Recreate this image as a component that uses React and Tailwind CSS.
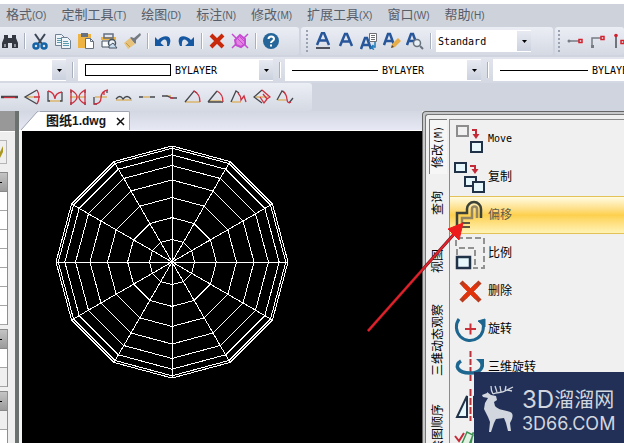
import clsx from "clsx";

const MENUS = [
  { label: "格式", hotkey: "(O)" },
  { label: "定制工具", hotkey: "(T)" },
  { label: "绘图", hotkey: "(D)" },
  { label: "标注", hotkey: "(N)" },
  { label: "修改", hotkey: "(M)" },
  { label: "扩展工具", hotkey: "(X)" },
  { label: "窗口", hotkey: "(W)" },
  { label: "帮助", hotkey: "(H)" },
];

const LETTER = "M3 15 L8 3 H10 L15 15 M5.5 10.5 H12.5";

const EDIT_ICONS = {
  find: (
    <g fill="#343941">
      <path d="M3 3h4v3h4V3h4v3l2 5v5h-6v-5H7v5H1v-5l2-5z" />
      <path d="M3 12h2v3H3zM13 12h2v3h-2z" fill="#8d939d" />
    </g>
  ),
  cut: (
    <g fill="none">
      <path d="M4 2l7 10M14 2L7 12" stroke="#3c4654" strokeWidth="2" />
      <circle cx="5" cy="14" r="2.5" stroke="#1664a8" strokeWidth="2.500" />
      <circle cx="13" cy="14" r="2.5" stroke="#1664a8" strokeWidth="2.500" />
    </g>
  ),
  copy: (
    <g fill="#eef4f8" stroke="#6f8193">
      <path d="M1.500 2.500h6l3 3v8h-9z" />
      <path d="M3 6.500h4M3 8.500h4M3 10.500h4" stroke="#5b9aad" />
      <path d="M7.500 5.500h6l3 3v8h-9z" />
      <path d="M9 9.500h5M9 11.500h6M9 13.500h6" stroke="#5b9aad" />
    </g>
  ),
  paste: (
    <g>
      <path d="M1 2h13v14H1z" fill="#edb343" />
      <path d="M4 1h7v4H4z" fill="#657080" />
      <path d="M8.500 6.500h5l3 3v7h-8z" fill="#fff" stroke="#66717f" />
      <path d="M13.500 6.500v3h3" fill="none" stroke="#66717f" />
    </g>
  ),
  pasteSpecial: (
    <g>
      <path d="M1 5h15v3H1z" fill="#edb343" />
      <path d="M4 2h9v4H4z" fill="none" stroke="#657080" strokeWidth="1.500" />
      <path d="M2 9h8v6H2z" fill="#f8fafb" stroke="#465361" />
      <circle cx="12" cy="11" r="3.500" fill="#eef4f8" stroke="#465361" strokeWidth="1.500" />
      <path d="M9 14l4-3 4 5H9z" fill="#c9dff1" stroke="#465361" />
    </g>
  ),
  brush: (
    <g>
      <path d="M17 1l-6 5-3-1-1 1 5 6 1-1 0-3 5-5z" fill="#747a80" />
      <path d="M7 6L1 11l4 6 7-5z" fill="#e7c27a" />
      <path d="M3 11l4 4" stroke="#c79a45" />
    </g>
  ),
  undo: <path d="M1 5v9h9l-3.500-3C9 6 14 6 13 14h2C20 3 10 2 4 8z" fill="#1557a0" />,
  redo: <path d="M17 5v9H8l3.500-3C9 6 4 6 5 14H3C-2 3 8 2 14 8z" fill="#1557a0" />,
  erase: <path d="M3 3l12 12M15 3L3 15" stroke="#c8290b" strokeWidth="4" />,
  explode: (
    <g stroke="#c54bd0" fill="none">
      <path d="M1 2l4 4M17 2l-4 4M1 16l4-4M17 16l-4-4" strokeWidth="1.500" />
      <path d="M9 3l5 4v5l-4 3-5-2-1-5z" fill="#e483e4" strokeWidth="2" />
      <path d="M7 7l5 5M9 5l4 4" stroke="#c54bd0" />
    </g>
  ),
  help: (
    <g>
      <circle cx="9" cy="9" r="8" fill="#24669a" />
      <path d="M6.500 7c0-3.500 5.500-3.500 5.500 0 0 2-3 2-3 4" fill="none" stroke="#fff" strokeWidth="2" />
      <path d="M8 12.500h2v2H8z" fill="#fff" />
    </g>
  ),
};

const TEXT_ICONS = {
  single: (
    <g fill="none">
      <path d={LETTER} stroke="#28569a" strokeWidth="2.500" transform="translate(0 -2)" />
      <path d="M2 16h14" stroke="#1c222c" strokeWidth="1.500" />
    </g>
  ),
  multi: <path d={LETTER} fill="none" stroke="#28569a" strokeWidth="2.500" transform="translate(0 -1)" />,
  field: (
    <g fill="none">
      <path d="M1 17L5 6h2l4 11M3 13h6" stroke="#28569a" strokeWidth="2.500" />
      <path d="M9.500 1.500h7v8h-7z" fill="#fff" stroke="#6d6f73" />
      <path d="M11 3.500h4M11 5.500h4M11 7.500h4" stroke="#6d6f73" />
      <path d="M15 10v5h-3M13.500 13L11 15.500l3 2" stroke="#1e79b8" strokeWidth="1.500" />
    </g>
  ),
  edit: (
    <g fill="none">
      <path d="M1 13L5 2h2l4 11M3 9h6" stroke="#28569a" strokeWidth="2.500" />
      <path d="M8 16l1-4 6-6 3 3-6 6z" fill="#e8ad4b" />
      <path d="M8 16l1-3 2 2z" fill="#5d4630" />
    </g>
  ),
  search: (
    <g fill="none">
      <path d="M1 13L5 2h2l4 11M3 9h6" stroke="#28569a" strokeWidth="2.500" />
      <circle cx="11" cy="11" r="3.500" fill="#eaf1f6" stroke="#68727e" strokeWidth="1.500" />
      <path d="M14 14l3 3" stroke="#68727e" strokeWidth="2" />
    </g>
  ),
};

const LEADER_ICONS = {
  straight: (
    <g>
      <path d="M3 9h10" stroke="#777c84" strokeWidth="1.500" />
      <circle cx="3" cy="9" r="1.500" fill="#777c84" />
      <rect x="13" y="7.500" width="3" height="3" fill="none" stroke="#d5202c" strokeWidth="1.500" />
    </g>
  ),
  elbow: (
    <g>
      <path d="M3 15V6h9" fill="none" stroke="#777c84" strokeWidth="1.500" />
      <path d="M2 13h3v3H2z" fill="#777c84" />
      <rect x="12" y="4.500" width="3" height="3" fill="none" stroke="#d5202c" strokeWidth="1.500" />
    </g>
  ),
  upright: (
    <g>
      <path d="M4 5v11" stroke="#4b5058" strokeWidth="1.500" />
      <circle cx="4" cy="3.500" r="1.800" fill="#d5202c" />
      <rect x="9" y="8.500" width="3" height="3" fill="none" stroke="#d5202c" strokeWidth="1.500" />
    </g>
  ),
};

// each curve: dark strokes, red strokes, tan base line
const CURVES = [
  { name: "直线", dark: "M0 8.500h17M0 9.500h3M14 9.500h3", red: "M3 9.500h11", tan: "" },
  { name: "扇形", dark: "M14 2L2 9l12 7", red: "M14 2q4 7 0 14M11 9h6", tan: "M3 9h9" },
  { name: "双弧", dark: "M2 3v10h2M16 4v9h-2", red: "M2 3q6 1 7 8q0-6 7-7", tan: "M3 13h12" },
  { name: "对弧", dark: "M2 2v3M2 14v3M16 2v3M16 14v3", red: "M2 2q12 7 0 14zM16 2q-12 7 0 14z", tan: "M1 9h16" },
  { name: "反弧", dark: "M2 9v7h3M15 2v3", red: "M16 2q-7 1-7 8q0 6-7 6M12 3v4", tan: "M3 9h12" },
  { name: "双拱", dark: "M1 11q4-5 7 0q4-5 8 0", red: "", tan: "M1 12h16" },
  { name: "虚线", dark: "M1 9h4M12 9h5", red: "", tan: "M5 9h7" },
  { name: "折线", dark: "M1 8h5l5 2h5", red: "M9 10h3", tan: "M5 8h5" },
  { name: "弧角", dark: "M1 14L10 3l3 2", red: "M10 3q6 3 6 11", tan: "M1 14h15" },
  { name: "弧角二", dark: "M1 14L10 3M1 14h15", red: "M10 3q6 3 6 11", tan: "M3 13h11" },
  { name: "弧折", dark: "M1 14L6 3l3 2", red: "M8 5q3 3 3 7l3-4l2 6", tan: "M2 14h9" },
  { name: "菱形", dark: "M9 2L1 9l8 6", red: "M9 2l8 7l-3 2l-4-5M7 9l4 6l3-4", tan: "M3 9h12" },
  { name: "弧波", dark: "M1 12L6 3l3 2M13 15l4-5", red: "M7 3q4 4 4 9q1 4 4 2", tan: "M2 12h8" },
];

const PALETTE_TABS = [
  { label: "修改", hotkey: "(M)" },
  { label: "查询" },
  { label: "视图" },
  { label: "三维动态观察" },
  { label: "绘图顺序" },
];

const TOOLS = [
  {
    name: "Move",
    icon: (
      <g fill="none">
        <path d="M4 4h11v10H4z" stroke="#8d8d8d" strokeWidth="2" />
        <path d="M19 8h4v5" stroke="#c52a37" strokeWidth="2" />
        <path d="M19.500 12h7L23 17z" fill="#c52a37" />
        <path d="M18 20h11v10H18z" fill="#e6f8fc" stroke="#203247" strokeWidth="2" />
      </g>
    ),
  },
  {
    name: "复制",
    icon: (
      <g fill="none">
        <path d="M2 3h11v9H2z" fill="#e6f8fc" stroke="#203247" strokeWidth="2" />
        <path d="M17 6h5v5" stroke="#c52a37" strokeWidth="2" />
        <path d="M18.500 9h7L22 14z" fill="#c52a37" />
        <path d="M12 17h11v9H12z" fill="#e6f8fc" stroke="#203247" strokeWidth="2" />
        <path d="M20 22h11v10H20z" fill="#e6f8fc" stroke="#203247" strokeWidth="2" />
      </g>
    ),
  },
  {
    name: "偏移",
    active: true,
    icon: (
      <g fill="none">
        <path d="M4 28V15h10v-4a7 7 0 0 1 14 0v9" stroke="#3d4238" strokeWidth="2.500" />
        <path d="M9 25v-5h10v-9a2.500 2.500 0 0 1 5 0v9" stroke="#938561" strokeWidth="2.500" />
        <path d="M9 25h8M9 29h8" stroke="#5b563f" strokeWidth="2" />
      </g>
    ),
  },
  {
    name: "比例",
    icon: (
      <g fill="none">
        <path d="M3 10V2h28v30H20" stroke="#929292" strokeWidth="2" strokeDasharray="6 3" />
        <path d="M4 19v-7h18v20" stroke="#929292" strokeWidth="2" strokeDasharray="6 3" />
        <path d="M4 21h13v11H4z" fill="#e6f8fc" stroke="#203247" strokeWidth="2.500" />
      </g>
    ),
  },
  {
    name: "删除",
    icon: (
      <g strokeWidth="4.500">
        <path d="M8 8l19 19M27 8L8 27" stroke="#b93a1c" />
        <path d="M11 11l13 13M24 11L11 24" stroke="#e0330c" />
      </g>
    ),
  },
  {
    name: "旋转",
    icon: (
      <g fill="none">
        <path d="M6 7a13.500 13.500 0 1 0 23 2" stroke="#1c668f" strokeWidth="3" />
        <path d="M25 9l7-2v8z" fill="#1c668f" stroke="#1c668f" />
        <path d="M12 17h11M17.500 11.500v11" stroke="#c9303a" strokeWidth="2" />
      </g>
    ),
  },
  {
    name: "三维旋转",
    icon: (
      <g fill="none">
        <path d="M17.500 1v32" stroke="#b83239" strokeWidth="2" strokeDasharray="6 2" />
        <path d="M8 11c-7 4-4 12 9 12 11 0 14-6 11-12" stroke="#1c668f" strokeWidth="3.500" />
        <path d="M23 9h8v8z" fill="#1c668f" />
      </g>
    ),
  },
  {
    name: "镜像",
    iconOnly: true,
    icon: (
      <g fill="none">
        <path d="M4 29h10V8z" fill="#e6f8fc" stroke="#203247" strokeWidth="2" />
        <path d="M31 29H21V8z" fill="#e6f8fc" stroke="#203247" strokeWidth="2" />
        <path d="M17.500 1v32" stroke="#b83239" strokeWidth="2" strokeDasharray="7 2" />
      </g>
    ),
  },
  {
    name: "更改",
    iconOnly: true,
    icon: (
      <g fill="none">
        <path d="M2 10l4 5 5-8" stroke="#c52a37" strokeWidth="2" />
        <path d="M7 22l7-16 6 3-6 15zM17 22l3-15h5v17" fill="#e2f2e2" stroke="#3f9254" strokeWidth="1.500" />
      </g>
    ),
  },
];

const RING_COUNT = 8;
const SPOKE_COUNT = 12;
const MESH_RADIUS = 116;

function meshPoint(radius, i) {
  const angle = (i * 2 * Math.PI) / SPOKE_COUNT;
  return [radius * Math.sin(angle), -radius * Math.cos(angle)];
}

function SphereMesh() {
  const rings = Array.from({ length: RING_COUNT }, (_, k) => MESH_RADIUS * Math.sin(((k + 1) * Math.PI) / (2 * RING_COUNT)));
  const spokes = Array.from({ length: SPOKE_COUNT }, (_, i) => i);
  return (
    <svg className="ml-[30px] mt-[11px] size-[240px]" viewBox="-120 -120 240 240" fill="none" stroke="#fff" shapeRendering="crispEdges">
      {rings.map((r) => (
        <polygon key={r} points={spokes.map((i) => meshPoint(r, i).join(",")).join(" ")} />
      ))}
      {spokes.map((i) => {
        const [x, y] = meshPoint(MESH_RADIUS, i);
        return <line key={i} x1="0" y1="0" x2={x} y2={y} />;
      })}
    </svg>
  );
}

function ToolButton({ label, narrow, children }) {
  return (
    <button type="button" aria-label={label} className={clsx("flex h-full shrink-0 items-center justify-center", narrow ? "w-5" : "w-[23px]")}>
      <svg className="size-[18px]" viewBox="0 0 18 18">{children}</svg>
    </button>
  );
}

function Separator() {
  return (
    <span className="flex w-2 shrink-0 justify-center">
      <span className="h-4 w-px bg-[#a9b0bd] shadow-[1px_0_0_#fff]" />
    </span>
  );
}

function Grip() {
  return (
    <span className="flex w-2 shrink-0 flex-col items-center gap-[2px]">
      {[0, 1, 2, 3, 4, 5].map((n) => (
        <span key={n} className="size-[2px] bg-[#9aa2b2]" />
      ))}
    </span>
  );
}

function Bar({ className, children }) {
  return (
    <div className={clsx("flex h-7 shrink-0 items-center rounded-r-[3px] bg-gradient-to-b from-[#eceef5] to-[#d4d9e3]", className)}>
      {children}
    </div>
  );
}

function Combo({ label, value, className, children }) {
  return (
    <label className={clsx("flex h-[22px] shrink-0 items-center bg-white", className)}>
      {children}
      <select
        aria-label={label}
        defaultValue={value}
        className="h-full min-w-0 flex-1 appearance-none bg-transparent text-[10px] text-black outline-none"
      >
        <option>{value}</option>
      </select>
      <span className="flex h-5 w-[14px] shrink-0 items-center justify-center bg-gradient-to-b from-[#e7eaf1] to-[#cbd1de]">
        <svg className="h-[3px] w-[5px]" viewBox="0 0 5 3"><path d="M0 0h5L2.500 3z" /></svg>
      </span>
    </label>
  );
}

function Toolbars() {
  return (
    <div className="flex shrink-0 flex-col bg-[#d0d4de]">
      <div className="flex gap-[2px]">
        <Bar className="pr-[17px]">
          <ToolButton label="查找" narrow>{EDIT_ICONS.find}</ToolButton>
          <Separator />
          <ToolButton label="剪切">{EDIT_ICONS.cut}</ToolButton>
          <ToolButton label="复制">{EDIT_ICONS.copy}</ToolButton>
          <ToolButton label="粘贴">{EDIT_ICONS.paste}</ToolButton>
          <ToolButton label="选择性粘贴">{EDIT_ICONS.pasteSpecial}</ToolButton>
          <ToolButton label="特性匹配">{EDIT_ICONS.brush}</ToolButton>
          <Separator />
          <ToolButton label="放弃">{EDIT_ICONS.undo}</ToolButton>
          <ToolButton label="重做">{EDIT_ICONS.redo}</ToolButton>
          <Separator />
          <ToolButton label="删除">{EDIT_ICONS.erase}</ToolButton>
          <ToolButton label="分解">{EDIT_ICONS.explode}</ToolButton>
          <Separator />
          <ToolButton label="帮助">{EDIT_ICONS.help}</ToolButton>
        </Bar>
        <Bar className="rounded-l-[3px] pl-[2px] pr-[22px]">
          <Grip />
          <ToolButton label="单行文字">{TEXT_ICONS.single}</ToolButton>
          <ToolButton label="多行文字">{TEXT_ICONS.multi}</ToolButton>
          <ToolButton label="字段">{TEXT_ICONS.field}</ToolButton>
          <ToolButton label="编辑文字">{TEXT_ICONS.edit}</ToolButton>
          <ToolButton label="查找文字">{TEXT_ICONS.search}</ToolButton>
          <Separator />
          <Combo label="文字样式" value="Standard" className="ml-[2px] w-[95px] pl-[2px]" />
        </Bar>
        <Bar className="flex-1 overflow-hidden rounded-l-[3px]">
          <Grip />
          <ToolButton label="直线标注">{LEADER_ICONS.straight}</ToolButton>
          <ToolButton label="折线标注">{LEADER_ICONS.elbow}</ToolButton>
          <ToolButton label="垂直标注">{LEADER_ICONS.upright}</ToolButton>
        </Bar>
      </div>

      <div className="mt-[2px] flex h-[26px] items-center overflow-hidden bg-gradient-to-b from-[#e2e5ed] to-[#d4d8e2]">
        <Combo label="图层" value="" className="w-[66px]" />
        <span className="w-3 px-[2px]"><Separator /></span>
        <Combo label="颜色" value="BYLAYER" className="w-[195px] pl-[7px]">
          <span className="mr-1 h-3 w-[86px] border border-black" />
        </Combo>
        <span className="w-[13px] px-[2px]"><Separator /></span>
        <Combo label="线型" value="BYLAYER" className="w-[196px] pl-[7px]">
          <span className="mr-1 h-px w-[86px] bg-black" />
        </Combo>
        <span className="w-3 px-[2px]"><Separator /></span>
        <Combo label="线宽" value="BYLAYER" className="w-[196px] pl-[7px]">
          <span className="mr-1 h-px w-[88px] bg-black" />
        </Combo>
      </div>

      <div className="flex">
        <Bar className="pr-4">
          {CURVES.map((curve, i) => (
            <ToolButton key={curve.name} label={curve.name} narrow={i === 0}>
              <g fill="none">
                <path d={curve.tan} stroke="#dcc08c" strokeWidth="2" />
                <path d={curve.dark} stroke="#44484d" strokeWidth="1.300" />
                <path d={curve.red} stroke="#cf3040" strokeWidth="1.300" />
              </g>
            </ToolButton>
          ))}
        </Bar>
      </div>
    </div>
  );
}

function PropertyGroup({ rows }) {
  return (
    <div className="mb-1 w-2 border-r border-[#8f8f8f]">
      <div className="flex h-5 items-center border-y border-[#8a8a8a] bg-gradient-to-b from-[#c4c4c4] to-[#9b9b9b]">
        <span className="h-px w-[2px] bg-black" />
      </div>
      {rows.map((color, i) => (
        <div key={i} className={clsx("h-[19px] border-b border-[#a5a5a5]", color)} />
      ))}
    </div>
  );
}

function PropertyPanel() {
  const white = "bg-white";
  const gray = "bg-[#efefef]";
  return (
    <aside className="flex w-[19px] shrink-0 overflow-hidden border-r-4 border-[#6b716f] bg-[#efefef]">
      <div className="flex w-full flex-col">
        <div className="mb-2 h-[21px] shrink-0 border-b border-white bg-[#989898]" />
        <button type="button" aria-label="快速选择" className="mb-2 flex h-6 w-[7px] shrink-0 items-center border-y border-r border-[#b5b5b5]">
          <svg className="h-3 w-1" viewBox="0 0 4 12"><path d="M3 0v6L0 12V6z" fill="#a99720" /></svg>
        </button>
        <PropertyGroup rows={[white, white, white, white, white, white, white]} />
        <PropertyGroup rows={[white, gray]} />
        <PropertyGroup rows={[gray, white]} />
      </div>
    </aside>
  );
}

function DocumentTab() {
  return (
    <div className="flex h-5 shrink-0 items-end border-b border-white bg-gradient-to-b from-[#d3d7e2] to-[#e6e9f3] pl-[2px]">
      <svg className="h-[19px] w-[19px]" viewBox="0 0 19 19">
        <path d="M0 19L17 0h2v19z" fill="#fff" />
        <path d="M0 19L16 1q1-1 3-1" fill="none" stroke="#9ea4b0" />
      </svg>
      <div className="flex h-[19px] items-center gap-2.5 rounded-tr-[2px] border-r border-t border-[#9ea4b0] bg-white pl-1.5 pr-1">
        <span className="whitespace-nowrap text-[13px] font-bold leading-4 text-[#15171c]">
          图纸<span className="text-[12px]">1.dwg</span>
        </span>
        <button type="button" aria-label="关闭">
          <svg className="size-[9px]" viewBox="0 0 9 9"><path d="M1 1l7 7M8 1L1 8" stroke="#111" strokeWidth="1.500" /></svg>
        </button>
      </div>
    </div>
  );
}

function PaletteTab({ label, hotkey, selected }) {
  return (
    <button
      type="button"
      role="tab"
      aria-selected={selected}
      className={clsx(
        "flex w-full shrink-0 items-center justify-center whitespace-nowrap",
        selected ? "border-l border-t border-[#777] bg-[#f6f6f6] py-1.5" : "min-h-[58px] py-3.5"
      )}
    >
      <span className="rotate-180 leading-4 [text-orientation:sideways] [writing-mode:vertical-rl]">
        {label}
        {hotkey && <span className="text-[10px]">{hotkey}</span>}
      </span>
    </button>
  );
}

function ToolPalette() {
  return (
    <section className="relative flex w-[202px] shrink-0 rounded-tl-[4px] border-l border-t border-[#666] bg-[#c6c8ca] pl-[2px] pt-[2px]">
      <div className="flex min-w-0 flex-1 rounded-tl-[3px] border-l border-t border-[#777] bg-[#f0f0f0] pl-[3px] pt-1 text-[12px] text-black">
        <div role="tablist" aria-orientation="vertical" className="flex w-5 shrink-0 flex-col overflow-hidden pr-[2px]">
          {PALETTE_TABS.map((tab, i) => (
            <PaletteTab key={tab.label} {...tab} selected={i === 0} />
          ))}
        </div>
        <div className="flex min-w-0 flex-1 flex-col overflow-hidden border-l border-t border-[#8b8b8b]">
          {TOOLS.map(({ name, icon, active, iconOnly }) => (
            <button
              key={name}
              type="button"
              aria-label={name}
              className={clsx(
                "flex h-[38px] shrink-0 items-center pl-[3px] text-left",
                active && "border-y border-[#e4c25a] bg-gradient-to-b from-[#fffbe0] via-[#fdd04b] to-[#fff3b4] text-[#625b48]"
              )}
            >
              <svg className="mr-px size-[34px] shrink-0" viewBox="0 0 34 34">{icon}</svg>
              {!iconOnly && <span className={clsx("leading-4", name === "Move" && "text-[10px]")}>{name}</span>}
            </button>
          ))}
        </div>
      </div>
      <svg className="pointer-events-none absolute -left-[58px] top-[108px] h-[114px] w-[100px]" viewBox="0 0 100 114">
        <path d="M3 111L90 13" stroke="#5d1515" strokeWidth="3" />
        <path d="M3 111L90 13" stroke="#e3202b" strokeWidth="2" />
        <path d="M98 3L83 9l11 11z" fill="#ed1b1b" stroke="#ed1b1b" />
      </svg>
    </section>
  );
}

function SiteBadge() {
  return (
    <div className="absolute bottom-0 right-0 flex h-[71px] w-[150px] items-center bg-[#223057] pl-2 text-[#d2d6de]">
      <svg className="h-12 w-9 shrink-0" viewBox="0 0 36 48">
        <path d="M5 8l4 3 5 1 1 4-3 2 1 4c3 4 10 4 15 6 3 1 3 4 2 7l-2 4 1 8h-3l-2-8-2-5-8 1-2 4-3 9H7l1-10-2-5-4-8 1-6 3-5-5-1-1-2 5-2z" fill="currentColor" />
        <path d="M11 10C9 7 9 4 9 2M11 10c4-2 9-1 12-3l8-4M15 8l-2-6M19 8l-1-6M23 7l1-5M25 6l5 1" fill="none" stroke="currentColor" strokeWidth="1.300" />
      </svg>
      <div className="flex flex-col whitespace-nowrap pl-1 pt-1">
        <div className="flex items-center font-[Inter,'Noto_Sans_CJK_SC',sans-serif] text-[20px] leading-7">
          <span className="text-[24px] leading-7">3D</span>溜溜网
        </div>
        <div className="font-[Inter,sans-serif] text-[18px] leading-5">3D66.COM</div>
      </div>
    </div>
  );
}

export default function App() {
  return (
    <div className="relative flex h-screen flex-col overflow-hidden bg-white pt-1 font-['DejaVu_Sans_Mono','Noto_Sans_CJK_SC',monospace]">
      <nav className="flex h-[23px] shrink-0 items-center gap-[15px] bg-[#cdd2db] pl-[6px] font-['Liberation_Sans','Noto_Sans_CJK_SC',sans-serif] text-[#575d69]">
        {MENUS.map(({ label, hotkey }) => (
          <button key={label} type="button" className="shrink-0 whitespace-nowrap text-[13px] leading-5">
            {label}<span className="text-[10px]">{hotkey}</span>
          </button>
        ))}
      </nav>
      <Toolbars />
      <main className="flex min-h-0 flex-1 bg-[#efefef]">
        <PropertyPanel />
        <div className="flex min-w-0 flex-1 flex-col font-['Liberation_Sans','Noto_Sans_CJK_SC',sans-serif]">
          <DocumentTab />
          <div className="min-h-0 flex-1 overflow-hidden border-l-[3px] border-[#f4f4f4] bg-black">
            <SphereMesh />
          </div>
        </div>
        <ToolPalette />
      </main>
      <SiteBadge />
    </div>
  );
}
